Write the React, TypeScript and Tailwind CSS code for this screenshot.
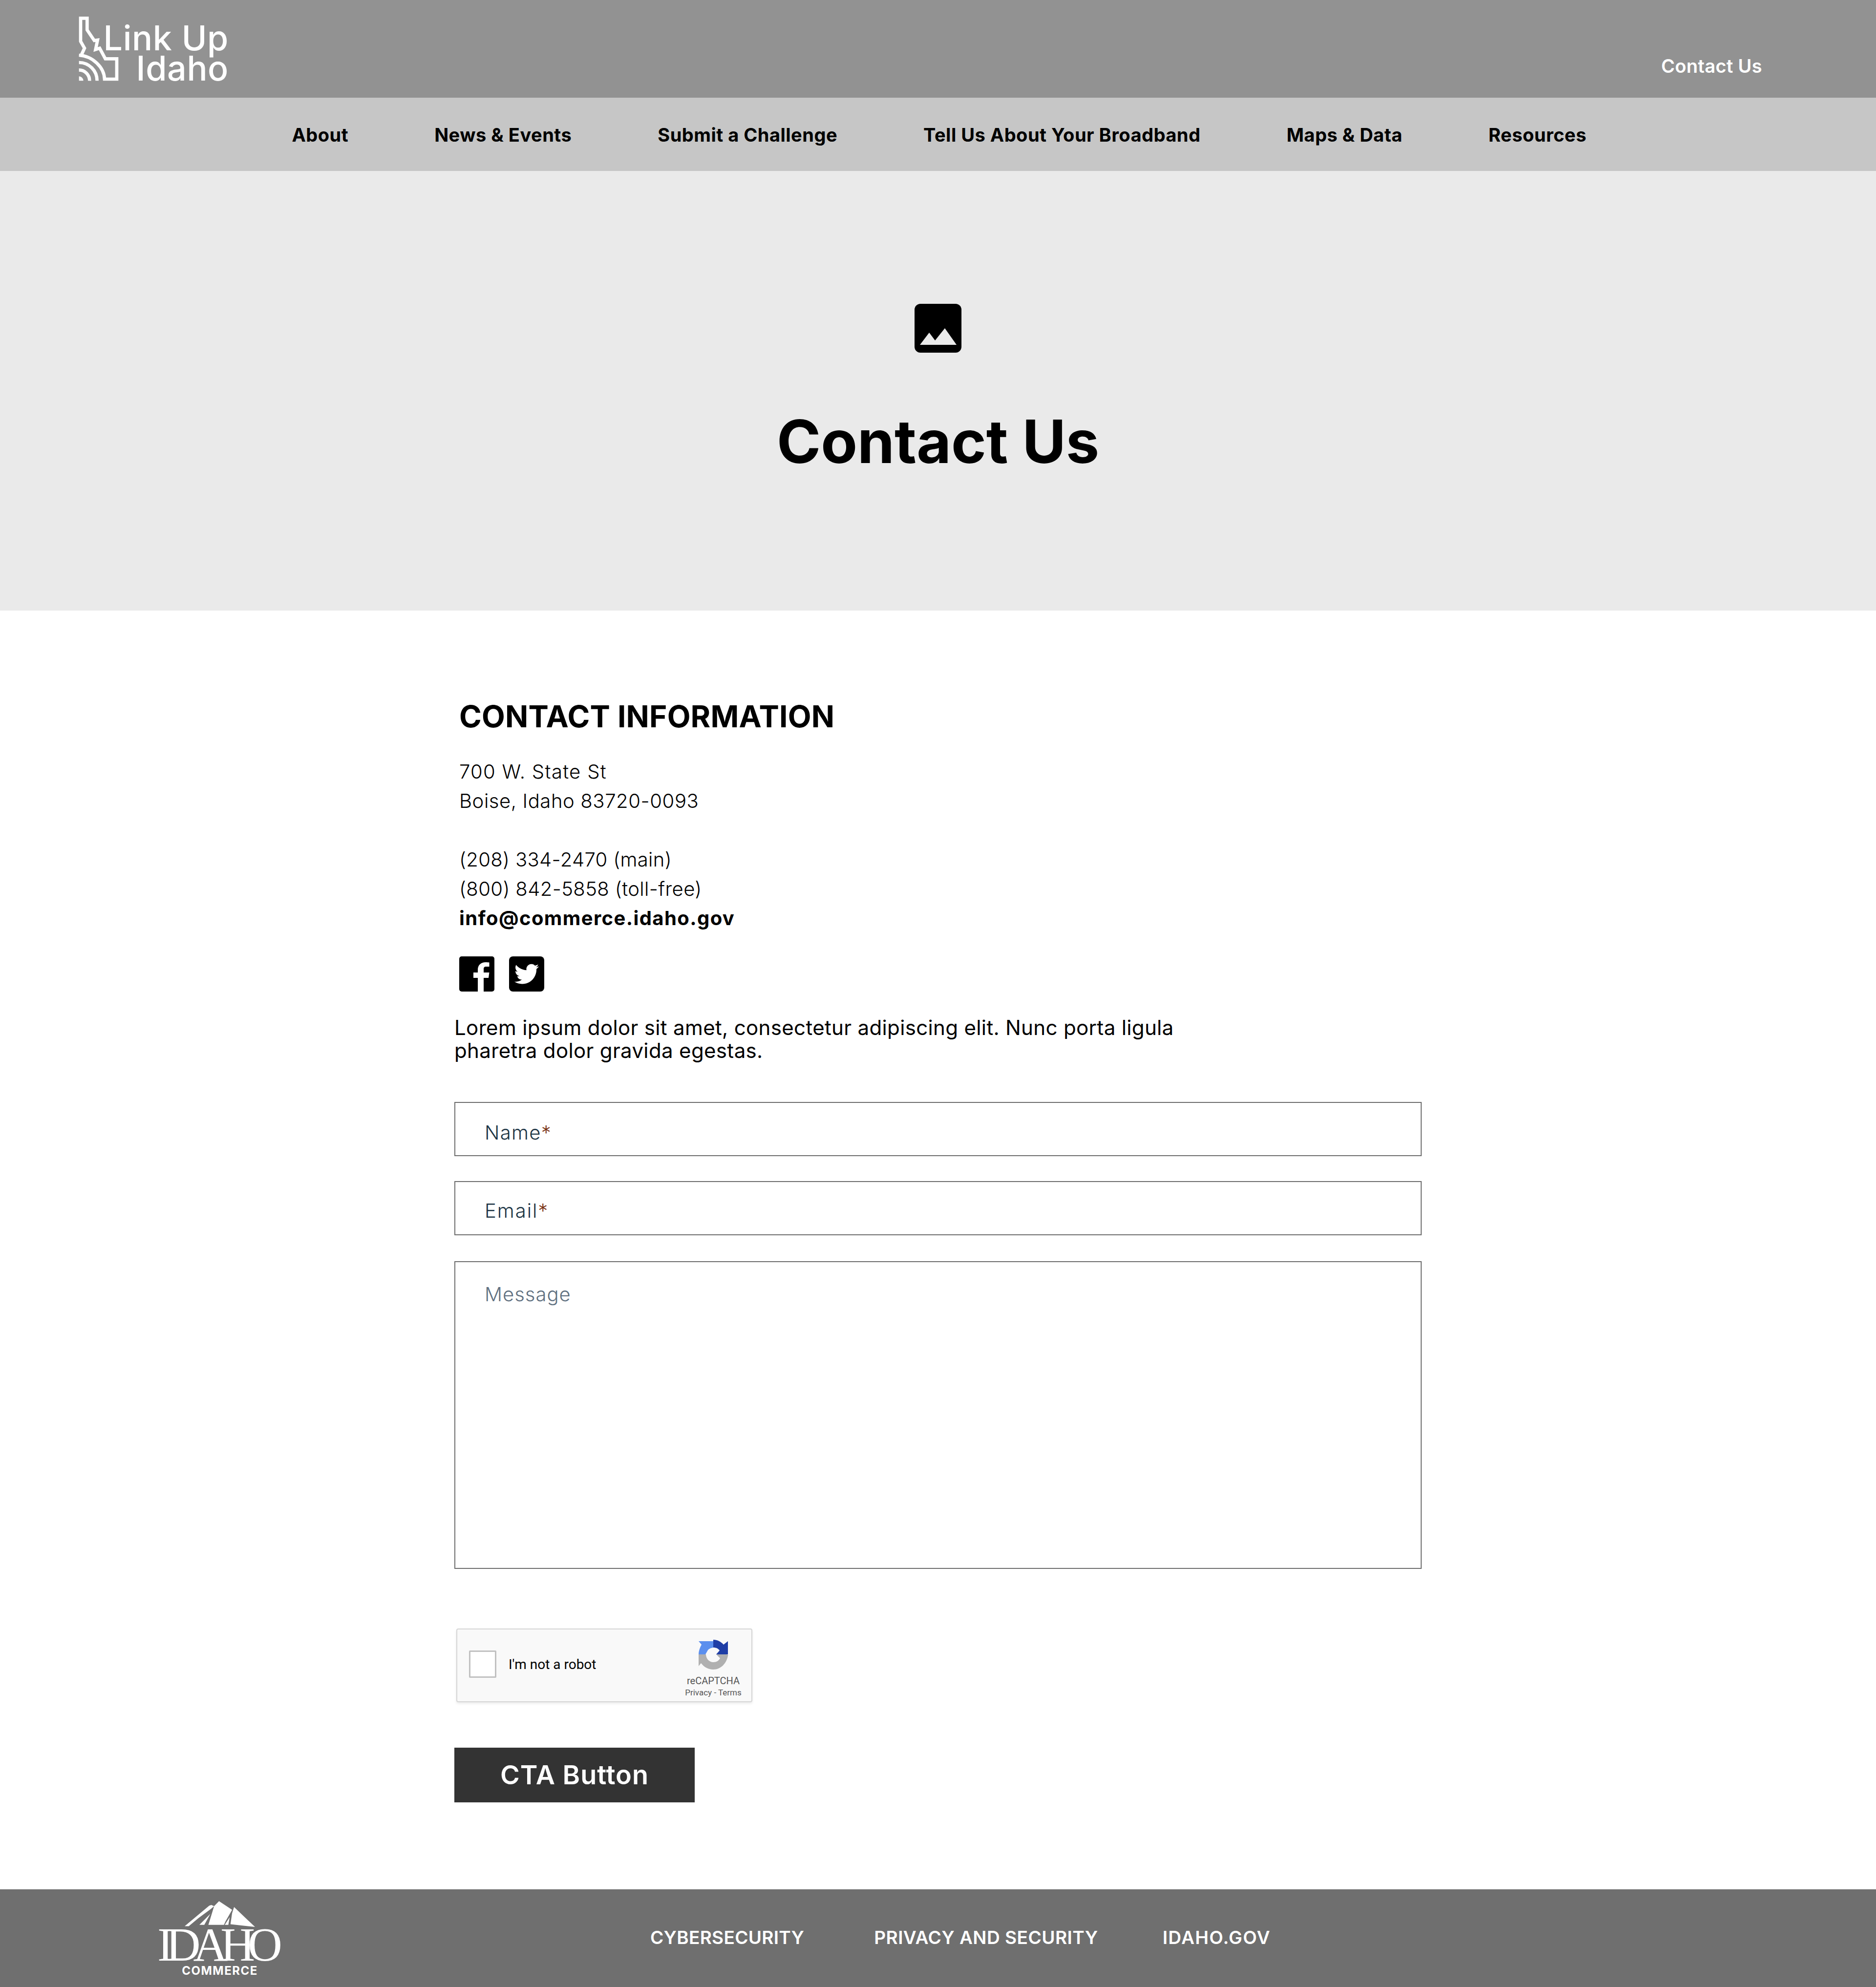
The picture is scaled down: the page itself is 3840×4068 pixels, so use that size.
import React from "react";

function LinkUpMark() {
  return (
    <svg width="86" height="134" viewBox="170 95 258 402" className="shrink-0">
      <g fill="none" stroke="#fff" strokeWidth="20" strokeLinejoin="miter">
        <path d="M178 335 C262 340 333 410 335 482 H410 V357 H340 L305 292 L280 300 L292 242 L272 245 L228 180 V108 H188 V250 L212 292 L192 335" />
        <path d="M178 380 A111 111 0 0 1 289 492" />
        <path d="M178 426 A65 65 0 0 1 243 492" />
      </g>
      <path d="M178 465 A27 27 0 0 1 205 492 H178 Z" fill="#fff" />
    </svg>
  );
}

function ImageIcon() {
  return (
    <svg width="96" height="100" viewBox="0 0 96 100" className="shrink-0">
      <rect width="96" height="100" rx="12" fill="#000" />
      <path d="M11 84 L30 59 L42 75 L62 50 L86 84 Z" fill="#eaeaea" />
    </svg>
  );
}

function Facebook() {
  return (
    <svg width="72" height="72" viewBox="0 0 72 72">
      <rect width="72" height="72" rx="5" fill="#000" />
      <path d="M50 72V44h10l1.5-11H50v-7c0-3 1-5 5-5h6.5V12.5C60 12.3 57 12 54 12c-9 0-16 5.5-16 15v6H29v11h9v28z" fill="#fff" />
    </svg>
  );
}

function Twitter() {
  return (
    <svg width="72" height="72" viewBox="0 0 72 72">
      <rect width="72" height="72" rx="8" fill="#000" />
      <g transform="translate(11 11) scale(2.09)">
        <path
          fill="#fff"
          d="M23.953 4.57a10 10 0 01-2.825.775 4.958 4.958 0 002.163-2.723c-.951.555-2.005.959-3.127 1.184a4.92 4.92 0 00-8.384 4.482C7.69 8.095 4.067 6.13 1.64 3.162a4.822 4.822 0 00-.666 2.475c0 1.71.87 3.213 2.188 4.096a4.904 4.904 0 01-2.228-.616v.06a4.923 4.923 0 003.946 4.827 4.996 4.996 0 01-2.212.085 4.936 4.936 0 004.604 3.417 9.867 9.867 0 01-6.102 2.105c-.39 0-.779-.023-1.17-.067a13.995 13.995 0 007.557 2.209c9.053 0 13.998-7.496 13.998-13.985 0-.21 0-.42-.015-.63A9.935 9.935 0 0024 4.59z"
        />
      </g>
    </svg>
  );
}

function RecaptchaLogo() {
  return (
    <svg width="61" height="61" viewBox="0 0 61 61">
      <path d="M0 30 C0 24 2 17 6 10 L0 3 H30 V16 C24 17 20 19 18 23 L14 30 Z" fill="#5b8fee" />
      <path d="M30 0 C38 0 46 4 51 10 L60 3 V30 H36 L43 22 C40 18 36 16 30 16 Z" fill="#1f3ea6" />
      <path d="M0 30 H15 C15 39 22 46 30 46 C37 46 41 43 44 38 L36 30 H52 C60 30 61 30 60 33 C57 48 46 61 30 61 C20 61 11 56 5 48 L0 54 Z" fill="#b0b0b0" />
    </svg>
  );
}

function IdahoMountains() {
  return (
    <svg width="144" height="54" viewBox="295 97 430 160" className="block">
      <g fill="#fff">
        <path d="M295 250 L445 125 L458 120 L475 128 L455 145 L380 200 L320 250 Z" />
        <path d="M452 175 L385 242 L415 242 Z" />
        <path d="M475 128 L505 97 L585 150 L545 220 L535 242 L440 242 Z" />
        <path d="M570 195 L540 242 L562 242 Z" />
        <path d="M597 133 L725 255 L575 238 L585 170 Z" />
      </g>
    </svg>
  );
}

const sans = "font-['Inter','Liberation_Sans',sans-serif]";

export default function App() {
  const nav = ["About", "News & Events", "Submit a Challenge", "Tell Us About Your Broadband", "Maps & Data", "Resources"];
  return (
    <div className={`w-[3840px] h-[4068px] bg-white text-black flex flex-col ${sans}`}>
      <header className="h-[200px] bg-[#929292] flex justify-between shrink-0">
        <div className="flex pl-[159px] pt-[33px]">
          <LinkUpMark />
          <div className="ml-[-23px] flex flex-col items-end text-white font-medium text-[70px] leading-[62px] tracking-[0.6px] pt-[14px] w-[246px] whitespace-nowrap">
            <span>Link Up</span>
            <span>Idaho</span>
          </div>
        </div>
        <div className="pr-[233px] pt-[113px] text-white font-semibold text-[38px] leading-[44px] tracking-[0.3px]">Contact Us</div>
      </header>

      <nav className="h-[150px] bg-[#c6c6c6] flex items-center justify-center gap-[176px] shrink-0 font-bold text-[38px] tracking-[0.5px] pt-[3px] pl-[5px]">
        {nav.map((n) => (
          <span key={n} className="whitespace-nowrap">{n}</span>
        ))}
      </nav>

      <section className="h-[900px] bg-[#eaeaea] flex flex-col items-center pt-[272px] shrink-0">
        <ImageIcon />
        <h1 className="mt-[117px] text-[122px] leading-[130px] font-bold">Contact Us</h1>
      </section>

      <main className="flex-1 pl-[930px] w-[2910px]">
        <div className="pl-[10px]">
          <h2 className="mt-[182px] text-[62px] leading-[70px] font-bold tracking-[0.2px]">CONTACT INFORMATION</h2>
          <div className="mt-[48px] text-[40px] leading-[60px] font-light">
            <div className="tracking-[1.3px]">700 W. State St</div>
            <div className="tracking-[0.6px]">Boise, Idaho 83720-0093</div>
            <div className="h-[60px]" />
            <div className="tracking-[0.35px]">(208) 334-2470 (main)</div>
            <div className="tracking-[0.4px]">(800) 842-5858 (toll-free)</div>
            <div className="font-bold tracking-[1.4px]">info@commerce.idaho.gov</div>
          </div>
          <div className="mt-[48px] flex gap-[30px]">
            <Facebook />
            <Twitter />
          </div>
        </div>
        <p className="mt-[50px] w-[1500px] text-[42px] leading-[47px] font-normal tracking-[0.35px]">
          Lorem ipsum dolor sit amet, consectetur adipiscing elit. Nunc porta ligula pharetra dolor gravida egestas.
        </p>

        <div className="mt-[82px] h-[111px] border-2 border-[#6f6f6f] pl-[60px] pt-[33px] text-[40px] leading-[56px] font-light text-[#1c3444] tracking-[1.3px]">
          Name<span className="text-[#7a3315]">*</span>
        </div>
        <div className="mt-[51px] h-[111px] border-2 border-[#6f6f6f] pl-[60px] pt-[31px] text-[40px] leading-[56px] font-light text-[#1c3444] tracking-[2px]">
          Email<span className="text-[#7a3315]">*</span>
        </div>
        <div className="mt-[53px] h-[630px] border-2 border-[#6f6f6f] pl-[60px] pt-[38px] text-[40px] leading-[56px] font-light text-[#5f7080] tracking-[1px]">
          Message
        </div>

        <div className="mt-[122px] ml-[4px] w-[606px] h-[151px] bg-[#f9f9f9] border-2 border-[#d6d6d6] rounded-[4px] shadow-[0_3px_5px_rgba(0,0,0,0.08)] flex font-['Roboto',sans-serif]">
          <div className="mt-[43px] ml-[24px] w-[56px] h-[56px] bg-white border-[3px] border-[#c1c1c1] rounded-[2px] shrink-0" />
          <div className="mt-[57px] ml-[25px] text-[28px] leading-[30px] text-black w-[360px] whitespace-nowrap">I'm not a robot</div>
          <div className="flex flex-col items-center w-[118px] pt-[21px] text-[#555]">
            <RecaptchaLogo />
            <div className="mt-[12px] text-[20px] leading-[22px] whitespace-nowrap">reCAPTCHA</div>
            <div className="mt-[3px] text-[17px] leading-[20px] whitespace-nowrap">Privacy - Terms</div>
          </div>
        </div>

        <button className="block mt-[93px] w-[492px] h-[112px] bg-[#333333] text-white text-[54px] leading-[112px] font-semibold text-center tracking-[1px]">
          CTA Button
        </button>
      </main>

      <footer className="h-[200px] bg-[#6f6f6f] flex shrink-0 text-white">
        <div className="ml-[327px] w-[246px] pt-[24px] flex flex-col items-center">
          <IdahoMountains />
          <div className="mt-[2px] h-[66px] font-['Liberation_Serif',serif] text-[98px] leading-[66px] tracking-[-15px] pr-[15px] whitespace-nowrap">IDAHO</div>
          <div className="mt-[7px] text-[24px] leading-[28px] font-bold tracking-[1.5px] whitespace-nowrap">COMMERCE</div>
        </div>
        <div className="flex items-start pt-[76px] text-[37px] leading-[46px] font-semibold whitespace-nowrap">
          <span className="ml-[758px] tracking-[0.3px]">CYBERSECURITY</span>
          <span className="ml-[143px] tracking-[0.5px]">PRIVACY AND SECURITY</span>
          <span className="ml-[132px] tracking-[1.4px]">IDAHO.GOV</span>
        </div>
      </footer>
    </div>
  );
}
